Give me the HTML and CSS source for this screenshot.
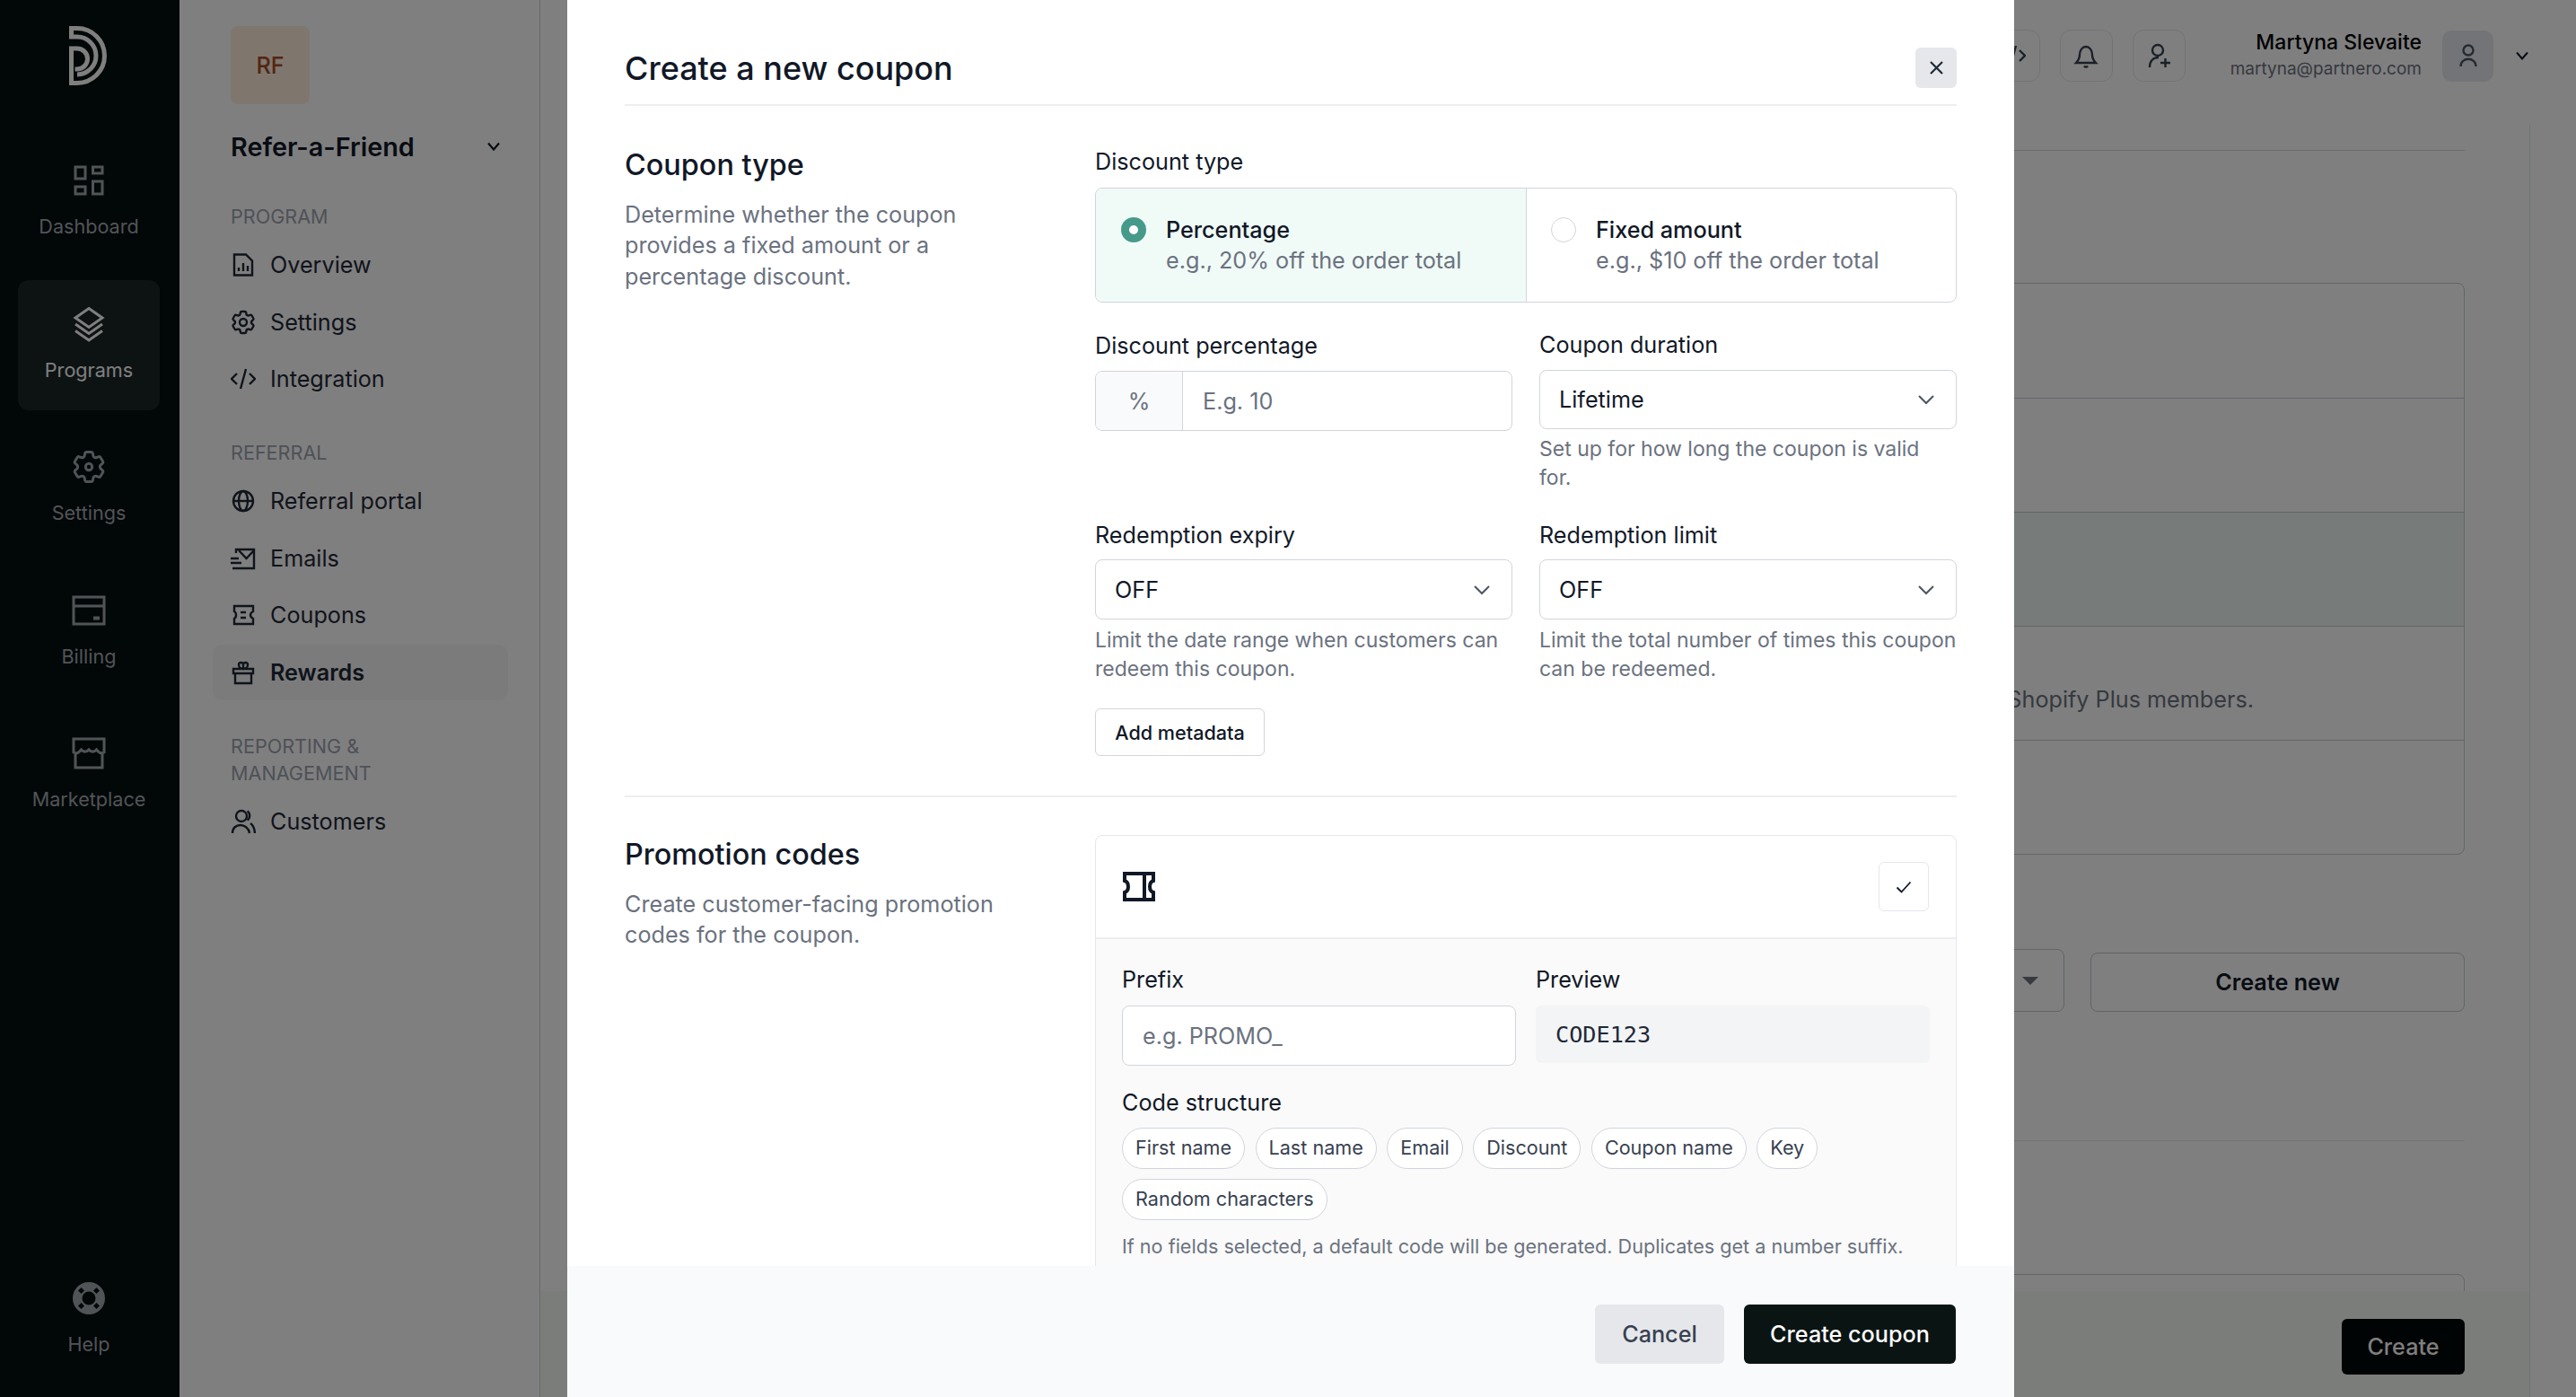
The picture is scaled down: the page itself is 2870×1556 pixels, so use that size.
FILE: index.html
```html
<!DOCTYPE html>
<html>
<head>
<meta charset="utf-8">
<title>Create a new coupon</title>
<link rel="stylesheet" href="styles.css">
</head>
<body>

<div class="app">
	<nav class="rail">
		<svg class="logo" viewBox="0 0 44 66" fill="none" stroke="currentColor" stroke-width="5"><path d="M9 54A21 21 0 0 0 9 12H2.500V2.500H9A30.500 30.500 0 0 1 9 63.500H2.500V25H9A11.500 11.500 0 0 1 9 48H6.500"/></svg>
		<a class="rail-item"><svg viewBox="0 0 44 44" fill="none" stroke="currentColor" stroke-width="3"><path d="M7 7h11v13H7zM26.500 7H37v7H26.500zM7 29h11v8H7zM26.500 23H37v14H26.500z"/></svg>Dashboard</a>
		<a class="rail-item active"><svg viewBox="0 0 44 44" fill="none" stroke="currentColor" stroke-width="3"><path d="M22 4.500 37 15 22 25.500 7 15z"/><path d="M7 22l15 10.500L37 22"/><path d="M7 29.500 22 40l15-10.500"/></svg>Programs</a>
		<a class="rail-item"><svg viewBox="0 0 24 24" fill="none" stroke="currentColor" stroke-width="1.600"><path d="M9.594 3.940c.09-.542.56-.94 1.110-.94h2.593c.55 0 1.020.398 1.110.94l.213 1.281c.063.374.313.686.645.870.074.040.147.083.22.127.325.196.72.257 1.075.124l1.217-.456a1.125 1.125 0 0 1 1.370.49l1.296 2.247a1.125 1.125 0 0 1-.26 1.431l-1.003.827c-.293.241-.438.613-.43.992a7.723 7.723 0 0 1 0 .255c-.008.378.137.75.43.991l1.004.827c.424.35.534.955.26 1.430l-1.298 2.247a1.125 1.125 0 0 1-1.369.491l-1.217-.456c-.355-.133-.75-.072-1.076.124a6.470 6.470 0 0 1-.22.128c-.331.183-.581.495-.644.869l-.213 1.281c-.09.543-.56.94-1.110.94h-2.594c-.55 0-1.019-.398-1.110-.94l-.213-1.281c-.062-.374-.312-.686-.644-.87a6.520 6.520 0 0 1-.22-.127c-.325-.196-.72-.257-1.076-.124l-1.217.456a1.125 1.125 0 0 1-1.369-.49l-1.297-2.247a1.125 1.125 0 0 1 .26-1.431l1.004-.827c.292-.24.437-.613.43-.991a6.932 6.932 0 0 1 0-.255c.007-.38-.138-.751-.43-.992l-1.004-.827a1.125 1.125 0 0 1-.26-1.430l1.297-2.247a1.125 1.125 0 0 1 1.370-.491l1.216.456c.356.133.751.072 1.076-.124.072-.044.146-.086.22-.128.332-.183.582-.495.644-.869l.214-1.280z"/><circle cx="12" cy="12" r="2"/></svg>Settings</a>
		<a class="rail-item"><svg viewBox="0 0 44 44" fill="none" stroke="currentColor" stroke-width="3"><path d="M5 7h34v30H5z"/><path d="M5 17h34"/><path d="M27 30.500h7" stroke-width="4"/></svg>Billing</a>
		<a class="rail-item"><svg viewBox="0 0 44 44" fill="none" stroke="currentColor" stroke-width="3"><path d="M5 6h34v15c-4 2-6 0-8.500-3-2.500 3-6 3-8.500 0-2.500 3-6 3-8.500 0-2.500 3-4.500 5-8.500 3z"/><path d="M7 23v15h30V23"/></svg>Marketplace</a>
		<a class="rail-item help"><svg viewBox="0 0 44 44"><circle cx="22" cy="22" r="18" fill="currentColor"/><circle cx="22" cy="22" r="7.500" fill="#040e10"/><path d="M13.500 10l3.500 3.500-3.500 3.500-3.500-3.500zM30.500 10l3.500 3.500-3.500 3.500-3.500-3.500zM13.500 27l3.500 3.500-3.500 3.500-3.500-3.500zM30.500 27l3.500 3.500-3.500 3.500-3.500-3.500z" fill="#040e10"/></svg>Help</a>
	</nav>

	<aside class="side">
		<div class="tile">RF</div>
		<div class="switch">Refer-a-Friend
			<svg class="chev-sm" viewBox="0 0 16 10" fill="none" stroke="currentColor" stroke-width="2.200"><path d="M2 1.500l6 7 6-7"/></svg>
		</div>

		<div class="group first">PROGRAM</div>
		<a class="item"><svg viewBox="0 0 28 28" fill="none" stroke="currentColor" stroke-width="2.400"><path d="M4 2.500h13l7 7v16H4z"/><path d="M9 21v-4M14 21v-9M19 21v-6"/></svg>Overview</a>
		<a class="item"><svg viewBox="1.500 1.500 21 21" fill="none" stroke="currentColor" stroke-width="1.800"><path d="M9.594 3.940c.09-.542.56-.94 1.110-.94h2.593c.55 0 1.020.398 1.110.94l.213 1.281c.063.374.313.686.645.870.074.040.147.083.22.127.325.196.72.257 1.075.124l1.217-.456a1.125 1.125 0 0 1 1.370.49l1.296 2.247a1.125 1.125 0 0 1-.26 1.431l-1.003.827c-.293.241-.438.613-.43.992a7.723 7.723 0 0 1 0 .255c-.008.378.137.75.43.991l1.004.827c.424.35.534.955.26 1.430l-1.298 2.247a1.125 1.125 0 0 1-1.369.491l-1.217-.456c-.355-.133-.75-.072-1.076.124a6.470 6.470 0 0 1-.22.128c-.331.183-.581.495-.644.869l-.213 1.281c-.09.543-.56.94-1.110.94h-2.594c-.55 0-1.019-.398-1.110-.94l-.213-1.281c-.062-.374-.312-.686-.644-.87a6.520 6.520 0 0 1-.22-.127c-.325-.196-.72-.257-1.076-.124l-1.217.456a1.125 1.125 0 0 1-1.369-.49l-1.297-2.247a1.125 1.125 0 0 1 .26-1.431l1.004-.827c.292-.24.437-.613.43-.991a6.932 6.932 0 0 1 0-.255c.007-.38-.138-.751-.43-.992l-1.004-.827a1.125 1.125 0 0 1-.26-1.430l1.297-2.247a1.125 1.125 0 0 1 1.370-.491l1.216.456c.356.133.751.072 1.076-.124.072-.044.146-.086.22-.128.332-.183.582-.495.644-.869l.214-1.280z"/><circle cx="12" cy="12" r="3"/></svg>Settings</a>
		<a class="item"><svg viewBox="0 0 28 28" fill="none" stroke="currentColor" stroke-width="2.400"><path d="M7 8l-6 6 6 6M21 8l6 6-6 6M17 3l-6 22"/></svg>Integration</a>

		<div class="group">REFERRAL</div>
		<a class="item"><svg viewBox="0 0 28 28" fill="none" stroke="currentColor" stroke-width="2.400"><circle cx="14" cy="14" r="11"/><ellipse cx="14" cy="14" rx="5" ry="11"/><path d="M3 14h22"/></svg>Referral portal</a>
		<a class="item"><svg viewBox="0 0 28 28" fill="none" stroke="currentColor" stroke-width="2.400"><path d="M6 8V4h20v21H2"/><path d="M9 5l8.500 9L26 5"/><path d="M0 14h9M0 19h12"/></svg>Emails</a>
		<a class="item"><svg viewBox="0 0 28 28" fill="none" stroke="currentColor" stroke-width="2.400"><path d="M4 4h21v6c-2 1-3 3-3 4s1 3 3 4v6H4v-6c2-1 2-3 2-4s0-3-2-4z"/><path d="M11 11h6M11 17h6"/></svg>Coupons</a>
		<a class="item current"><svg viewBox="0 0 28 28" fill="none" stroke="currentColor" stroke-width="2.400"><path d="M3 10h22v5H3zM5 15v11h18V15"/><path d="M14 10V5.500a2.500 2.500 0 0 0-5 0C9 8 11 10 14 10s5-2 5-4.500a2.500 2.500 0 0 0-5 0"/></svg>Rewards</a>

		<div class="group">REPORTING &amp; MANAGEMENT</div>
		<a class="item"><svg viewBox="0 0 28 28" fill="none" stroke="currentColor" stroke-width="2.400"><circle cx="12" cy="8" r="6"/><path d="M2 27c0-12 17-12 19 0M18.500 2.500c3.500 2 3.500 8 0 10M22 16c3 2 4.500 6 5 11"/></svg>Customers</a>
	</aside>

	<main class="main">
		<header class="top">
			<button class="round"><svg viewBox="0 0 28 28" fill="none" stroke="currentColor" stroke-width="2.400"><path d="M7 8l-6 6 6 6M21 8l6 6-6 6M17 3l-6 22"/></svg></button>
			<button class="round"><svg viewBox="0 0 28 28" fill="none" stroke="currentColor" stroke-width="2.400"><path d="M3 22c2-2 4-4 4-9 0-5 3-9 7-9s7 4 7 9c0 5 2 7 4 9z"/><path d="M12 25.500c1 1.500 3 1.500 4 0"/></svg></button>
			<button class="round"><svg viewBox="0 0 28 28" fill="none" stroke="currentColor" stroke-width="2.400"><circle cx="13" cy="8" r="6"/><path d="M4 27c0-7 4-11 10-11M16 22h11M21.500 17v10"/></svg></button>
			<div class="who">
				<strong>Martyna Slevaite</strong>
				<span>martyna@partnero.com</span>
			</div>
			<div class="avatar"><svg viewBox="0 0 20 26" fill="none" stroke="currentColor" stroke-width="2.400"><circle cx="10" cy="7" r="5.500"/><path d="M1.500 25c0-11 17-11 17 0"/></svg></div>
			<svg class="chev-top" viewBox="0 0 16 10" fill="none" stroke="currentColor" stroke-width="2"><path d="M2 1.500l6 7 6-7"/></svg>
		</header>

		<div class="content">
			<div class="pane">
				<hr class="rule">
				<div class="plans">
					<div class="plan"></div>
					<div class="plan"></div>
					<div class="plan on"></div>
					<div class="plan note">Shopify Plus members.</div>
					<div class="plan"></div>
				</div>
				<div class="picks">
					<div class="pick"><i class="tri"></i></div>
					<button class="make">Create new</button>
				</div>
				<hr class="rule low">
				<div class="stub"></div>
			</div>
			<div class="bar"><button class="go">Create</button></div>
		</div>
	</main>
</div>

<div class="shade"></div>

<section class="modal">
	<div class="modal-scroll">
		<div class="modal-head">
			<h1>Create a new coupon</h1>
			<button class="close"><svg viewBox="0 0 17 17" fill="none" stroke="currentColor" stroke-width="2.200"><path d="M2 2l13 13M15 2 2 15"/></svg></button>
		</div>

		<div class="block">
			<div class="intro">
				<h2>Coupon type</h2>
				<p>Determine whether the coupon provides a fixed amount or a percentage discount.</p>
			</div>
			<div class="fields">
				<label class="lab">Discount type</label>
				<div class="radios">
					<div class="radio picked">
						<i class="dot"></i>
						<div><b>Percentage</b><span>e.g., 20% off the order total</span></div>
					</div>
					<div class="radio">
						<i class="dot"></i>
						<div><b>Fixed amount</b><span>e.g., $10 off the order total</span></div>
					</div>
				</div>

				<div class="twin row-a">
					<div>
						<label class="lab">Discount percentage</label>
						<div class="addon"><span class="pre">%</span><span class="ph">E.g. 10</span></div>
					</div>
					<div class="nudge">
						<label class="lab">Coupon duration</label>
						<div class="select">Lifetime<svg viewBox="0 0 20 12" fill="none" stroke="currentColor" stroke-width="2"><path d="M2 2l8 8 8-8"/></svg></div>
						<p class="hint">Set up for how long the coupon is valid for.</p>
					</div>
				</div>

				<div class="twin row-b">
					<div>
						<label class="lab">Redemption expiry</label>
						<div class="select">OFF<svg viewBox="0 0 20 12" fill="none" stroke="currentColor" stroke-width="2"><path d="M2 2l8 8 8-8"/></svg></div>
						<p class="hint">Limit the date range when customers can redeem this coupon.</p>
					</div>
					<div>
						<label class="lab">Redemption limit</label>
						<div class="select">OFF<svg viewBox="0 0 20 12" fill="none" stroke="currentColor" stroke-width="2"><path d="M2 2l8 8 8-8"/></svg></div>
						<p class="hint">Limit the total number of times this coupon can be redeemed.</p>
					</div>
				</div>

				<button class="meta">Add metadata</button>
			</div>
		</div>

		<div class="block second">
			<div class="intro">
				<h2>Promotion codes</h2>
				<p>Create customer-facing promotion codes for the coupon.</p>
			</div>
			<div class="promo">
				<div class="promo-head">
					<svg class="ticket" viewBox="0 0 36 33" fill="none" stroke="currentColor" stroke-width="4"><path d="M2 2h32v8c-3 1-4 4-4 6.500s1 5.500 4 6.500v8H2v-8c3-1 4-4 4-6.500S5 11 2 10z"/><path d="M24 2v29"/></svg>
					<button class="tick"><svg viewBox="0 0 18 14" fill="none" stroke="currentColor" stroke-width="1.800"><path d="M1.500 7.500l5 5 10-11"/></svg></button>
				</div>
				<div class="promo-body">
					<div class="twin-b">
						<div>
							<label class="lab">Prefix</label>
							<div class="input"><span class="ph">e.g. PROMO_</span></div>
						</div>
						<div>
							<label class="lab">Preview</label>
							<div class="preview">CODE123</div>
						</div>
					</div>
					<label class="lab struct">Code structure</label>
					<div class="chips">
						<span>First name</span>
						<span>Last name</span>
						<span>Email</span>
						<span>Discount</span>
						<span>Coupon name</span>
						<span>Key</span>
						<span>Random characters</span>
					</div>
					<p class="hint fine">If no fields selected, a default code will be generated. Duplicates get a number suffix.</p>
				</div>
			</div>
		</div>
	</div>

	<div class="modal-foot">
		<button class="cancel">Cancel</button>
		<button class="create">Create coupon</button>
	</div>
</section>

</body>
</html>
```

FILE: styles.css
```css
html, body {
	height: 100%;
	margin: 0;
}

body {
	overflow: hidden;
	background: #fff;
	color: #111827;
	font-family: Inter, "Liberation Sans", sans-serif;
}

p, h1, h2 {
	margin: 0;
	font-weight: 500;
}

button {
	font-family: inherit;
	cursor: pointer;
}

svg {
	display: block;
	flex: none;
}

.app {
	display: flex;
	height: 1556px;
}

/* dark rail */
.rail {
	display: flex;
	flex-direction: column;
	align-items: center;
	gap: 14.400px;
	width: 200px;
	flex: none;
	box-sizing: border-box;
	padding: 29px 2px 14px 0;
	background: #040e10;
	color: #a3a9ae;
}

.logo {
	width: 44px;
	height: 66px;
	color: #fff;
	margin-bottom: 43px;
}

.rail-item {
	display: flex;
	flex-direction: column;
	align-items: center;
	width: 158px;
	height: 145px;
	box-sizing: border-box;
	padding-top: 27px;
	font-size: 21.600px;
	line-height: 28px;
	border-radius: 12px;
}

.rail-item svg {
	width: 44px;
	height: 44px;
	margin-bottom: 15px;
}

.rail-item.active {
	background: #1a2527;
	color: #fff;
}

.rail-item.help {
	margin-top: auto;
}

/* program menu */
.side {
	width: 402px;
	flex: none;
	box-sizing: border-box;
	padding: 29px 55px 0 57px;
	border-right: 1px solid #d1d5db;
}

.tile {
	display: flex;
	align-items: center;
	justify-content: center;
	width: 88px;
	height: 87px;
	border-radius: 8px;
	background: #feeeda;
	color: #a84b28;
	font-size: 25.200px;
	font-weight: 500;
}

.switch {
	display: flex;
	align-items: center;
	justify-content: space-between;
	margin: 27px -12px 0 0;
	height: 40px;
	font-size: 28.800px;
	font-weight: 600;
}

.chev-sm {
	width: 16px;
	height: 10px;
}

.group {
	margin-top: 36px;
	font-size: 21.600px;
	line-height: 30px;
	color: #9ca3af;
}

.group.first {
	margin-top: 43px;
}

.item {
	display: flex;
	align-items: center;
	gap: 16px;
	height: 62px;
	margin: 0 -20px 1.500px;
	padding: 0 20px;
	font-size: 25.200px;
	border-radius: 10px;
	color: #1f2937;
}

.group + .item {
	margin-top: 8px;
}

.item svg {
	width: 28px;
	height: 28px;
}

.item.current {
	font-weight: 600;
	background: #f6f7f7;
}

/* page behind the modal */
.main {
	flex: 1;
	display: flex;
	flex-direction: column;
	min-width: 0;
}

.top {
	display: flex;
	align-items: center;
	justify-content: flex-end;
	height: 124px;
	box-sizing: border-box;
	padding-right: 52px;
}

.round {
	display: flex;
	align-items: center;
	justify-content: center;
	width: 59px;
	height: 58px;
	margin-right: 22px;
	padding: 0;
	background: none;
	border: 1px solid #e5e7eb;
	border-radius: 12px;
	color: #374151;
}

.round svg {
	width: 28px;
	height: 28px;
}

.who {
	display: flex;
	flex-direction: column;
	align-items: flex-end;
	margin: 0 23px 0 28px;
}

.who strong {
	font-size: 23px;
	line-height: 30px;
	font-weight: 500;
	color: #000;
}

.who span {
	font-size: 19px;
	line-height: 30px;
	color: #6b7280;
}

.avatar {
	display: flex;
	align-items: center;
	justify-content: center;
	width: 57px;
	height: 57px;
	border-radius: 10px;
	background: #e6e8ef;
	color: #4b5563;
}

.avatar svg {
	width: 20px;
	height: 26px;
}

.chev-top {
	width: 16px;
	height: 10px;
	margin-left: 24px;
}

.content {
	flex: 1;
	display: flex;
	flex-direction: column;
	position: relative;
	width: 2217px;
	box-sizing: border-box;
	border-right: 1px solid #e5e7eb;
	margin-top: 15px;
	overflow: hidden;
}

.pane {
	padding: 28px 72px 0 60px;
}

.rule {
	margin: 0;
	border: 0;
	border-top: 1px solid #d1d5db;
}

.plans {
	margin-top: 147px;
	border: 1px solid #c4c8d0;
	border-radius: 8px;
}

.plan {
	height: 126px;
	border-top: 1px solid #c4c8d0;
}

.plan:first-child {
	border-top: 0;
	height: 127px;
}

.plan.on {
	background: #eef6f2;
}

.plan.note {
	box-sizing: border-box;
	height: 127px;
	padding: 64px 234px 0 0;
	text-align: right;
	font-size: 25.200px;
	line-height: 34px;
	color: #6b7280;
}

.picks {
	display: flex;
	gap: 29px;
	margin-top: 105px;
	align-items: flex-end;
}

.pick {
	flex: 1;
	height: 68px;
	display: flex;
	align-items: center;
	justify-content: flex-end;
	padding-right: 28px;
	border: 1px solid #c4c8d0;
	border-radius: 8px;
}

.tri {
	border: 9px solid transparent;
	border-top-color: #6b7280;
	border-bottom: 0;
}

.make {
	width: 417px;
	height: 66px;
	background: none;
	border: 1px solid #c4c8d0;
	border-radius: 8px;
	font-size: 25.200px;
	font-weight: 600;
	color: #111827;
}

.rule.low {
	margin-top: 143px;
	border-color: #e5e7eb;
}

.stub {
	height: 60px;
	margin-top: 148px;
	border: 1px solid #c4c8d0;
	border-radius: 8px;
}

/* sticky bottom bar of the page */
.bar {
	position: absolute;
	left: 0;
	right: 0;
	bottom: 0;
	height: 118px;
	display: flex;
	justify-content: flex-end;
	padding: 31px 72px 0 0;
	box-sizing: border-box;
	background: #f6faf7;
}

.go {
	width: 137px;
	height: 62px;
	background: #020809;
	border: 0;
	border-radius: 6px;
	color: #fff;
	font-size: 25.200px;
	font-weight: 500;
}

/* modal */
.shade {
	position: fixed;
	inset: 0;
	background: rgba(0, 0, 0, .5);
}

.modal {
	position: fixed;
	top: 0;
	bottom: 0;
	left: 632px;
	width: 1612px;
	display: flex;
	flex-direction: column;
	background: #fff;
}

.modal-scroll {
	flex: 1;
	min-height: 0;
	overflow: hidden;
	padding: 0 64px;
}

.modal-head {
	display: flex;
	align-items: center;
	justify-content: space-between;
	height: 118px;
	padding-top: 35px;
	box-sizing: border-box;
	border-bottom: 2px solid #eceef0;
}

.modal-head h1 {
	font-size: 36px;
	line-height: 50px;
}

.close {
	display: flex;
	align-items: center;
	justify-content: center;
	width: 46px;
	height: 45px;
	padding: 0;
	border: 0;
	border-radius: 6px;
	background: #e5e7eb;
	color: #1f2937;
}

.close svg {
	width: 17px;
	height: 17px;
}

.block {
	display: flex;
	padding: 46px 0 44px;
	border-bottom: 2px solid #eceef0;
}

.block.second {
	padding-top: 42px;
	border-bottom: 0;
}

.intro {
	width: 524px;
	flex: none;
}

.second .intro {
	padding-top: 2px;
}

.intro h2 {
	font-size: 32.400px;
	line-height: 40px;
}

.intro p {
	margin-top: 17.500px;
	width: 450px;
	font-size: 25.200px;
	line-height: 34.500px;
	font-weight: 400;
	color: #6b7280;
}

.fields, .promo {
	flex: 1;
	min-width: 0;
}

.lab {
	display: block;
	font-size: 25.200px;
	line-height: 32px;
	font-weight: 400;
	color: #111827;
}

.radios {
	display: flex;
	height: 128px;
	margin-top: 13px;
	box-sizing: border-box;
	border: 1.500px solid #d1d5db;
	border-radius: 8px;
	overflow: hidden;
}

.radio {
	flex: 1;
	display: flex;
	gap: 22px;
	padding: 29px 27px 0;
	box-sizing: border-box;
}

.radio.picked {
	padding-left: 28px;
	background: #f0fbf7;
	border-right: 1.500px solid #d1d5db;
}

.radio b {
	display: block;
	font-size: 25.200px;
	line-height: 34px;
	font-weight: 500;
}

.radio span {
	display: block;
	font-size: 25.200px;
	line-height: 34px;
	color: #6b7280;
}

.dot {
	width: 28px;
	height: 28px;
	margin-top: 2.500px;
	box-sizing: border-box;
	border: 1.500px solid #d1d5db;
	border-radius: 50%;
	background: #fff;
}

.picked .dot {
	border: 9px solid #469a8a;
}

.twin {
	display: grid;
	grid-template-columns: 465px 465px;
	column-gap: 30px;
}

.row-a {
	margin-top: 32px;
}

.row-b {
	margin-top: 32px;
}

.nudge {
	margin-top: -1px;
}

.addon, .select, .input {
	display: flex;
	align-items: center;
	box-sizing: border-box;
	height: 67px;
	margin-top: 12px;
	border: 1.500px solid #d1d5db;
	border-radius: 8px;
	background: #fff;
	font-size: 25.200px;
	overflow: hidden;
}

.select {
	justify-content: space-between;
	padding: 0 23px 0 21px;
}

.nudge .select {
	height: 66px;
}

.row-b .select {
	margin-top: 11px;
}

.select svg {
	width: 20px;
	height: 12px;
	color: #4b5563;
}

.pre {
	display: flex;
	align-items: center;
	justify-content: center;
	width: 96px;
	height: 100%;
	flex: none;
	background: #f9fafb;
	border-right: 1.500px solid #d1d5db;
	color: #6b7280;
}

.ph {
	padding-left: 22px;
	color: #6b7280;
}

.hint {
	margin-top: 6px;
	font-size: 23px;
	line-height: 32px;
	font-weight: 400;
	color: #6b7280;
}

.row-b .hint {
	margin-top: 7px;
}

.meta {
	display: block;
	width: 189px;
	height: 53px;
	margin-top: 28px;
	padding: 0;
	background: #fff;
	border: 1.500px solid #d1d5db;
	border-radius: 6px;
	font-size: 21.600px;
	font-weight: 500;
	color: #111827;
}

.promo {
	height: 700px;
	box-sizing: border-box;
	border: 1.500px solid #e5e7eb;
	border-radius: 8px;
	overflow: hidden;
}

.promo-head {
	display: flex;
	align-items: center;
	justify-content: space-between;
	height: 115px;
	box-sizing: border-box;
	padding: 0 30px;
	border-bottom: 2px solid #eceef0;
}

.ticket {
	width: 36px;
	height: 33px;
}

.tick {
	display: flex;
	align-items: center;
	justify-content: center;
	width: 56px;
	height: 55px;
	padding: 0;
	background: #fff;
	border: 1.500px solid #e5e7eb;
	border-radius: 6px;
	color: #111827;
}

.tick svg {
	width: 18px;
	height: 14px;
}

.promo-body {
	height: 100%;
	padding: 29px 29px 0;
	background: #fafafa;
}

.twin-b {
	display: grid;
	grid-template-columns: 439px 439px;
	column-gap: 22px;
}

.input {
	margin-top: 13px;
}

.preview {
	display: flex;
	align-items: center;
	height: 64px;
	margin-top: 13px;
	padding-left: 22px;
	border-radius: 6px;
	background: #f3f4f6;
	font-family: "DejaVu Sans Mono", monospace;
	font-size: 25.200px;
	color: #1f2937;
}

.struct {
	margin-top: 25px;
}

.chips {
	display: flex;
	flex-wrap: wrap;
	gap: 11px 11.500px;
	margin-top: 12px;
}

.chips span {
	padding: 0 14px;
	height: 46px;
	box-sizing: border-box;
	border: 1.500px solid #d1d5db;
	border-radius: 23px;
	background: #fff;
	font-size: 21.600px;
	line-height: 43px;
	color: #374151;
}

.hint.fine {
	margin-top: 13px;
	font-size: 21.600px;
}

.modal-foot {
	display: flex;
	justify-content: flex-end;
	gap: 22px;
	height: 146px;
	flex: none;
	box-sizing: border-box;
	padding: 43px 65px 0 0;
	background: #f9fafb;
}

.cancel, .create {
	height: 66px;
	border: 0;
	border-radius: 6px;
	padding: 0;
	font-size: 25.200px;
	font-weight: 500;
}

.cancel {
	width: 144px;
	background: #e5e7eb;
	color: #374151;
}

.create {
	width: 236px;
	background: #0a1513;
	color: #fff;
}
```
